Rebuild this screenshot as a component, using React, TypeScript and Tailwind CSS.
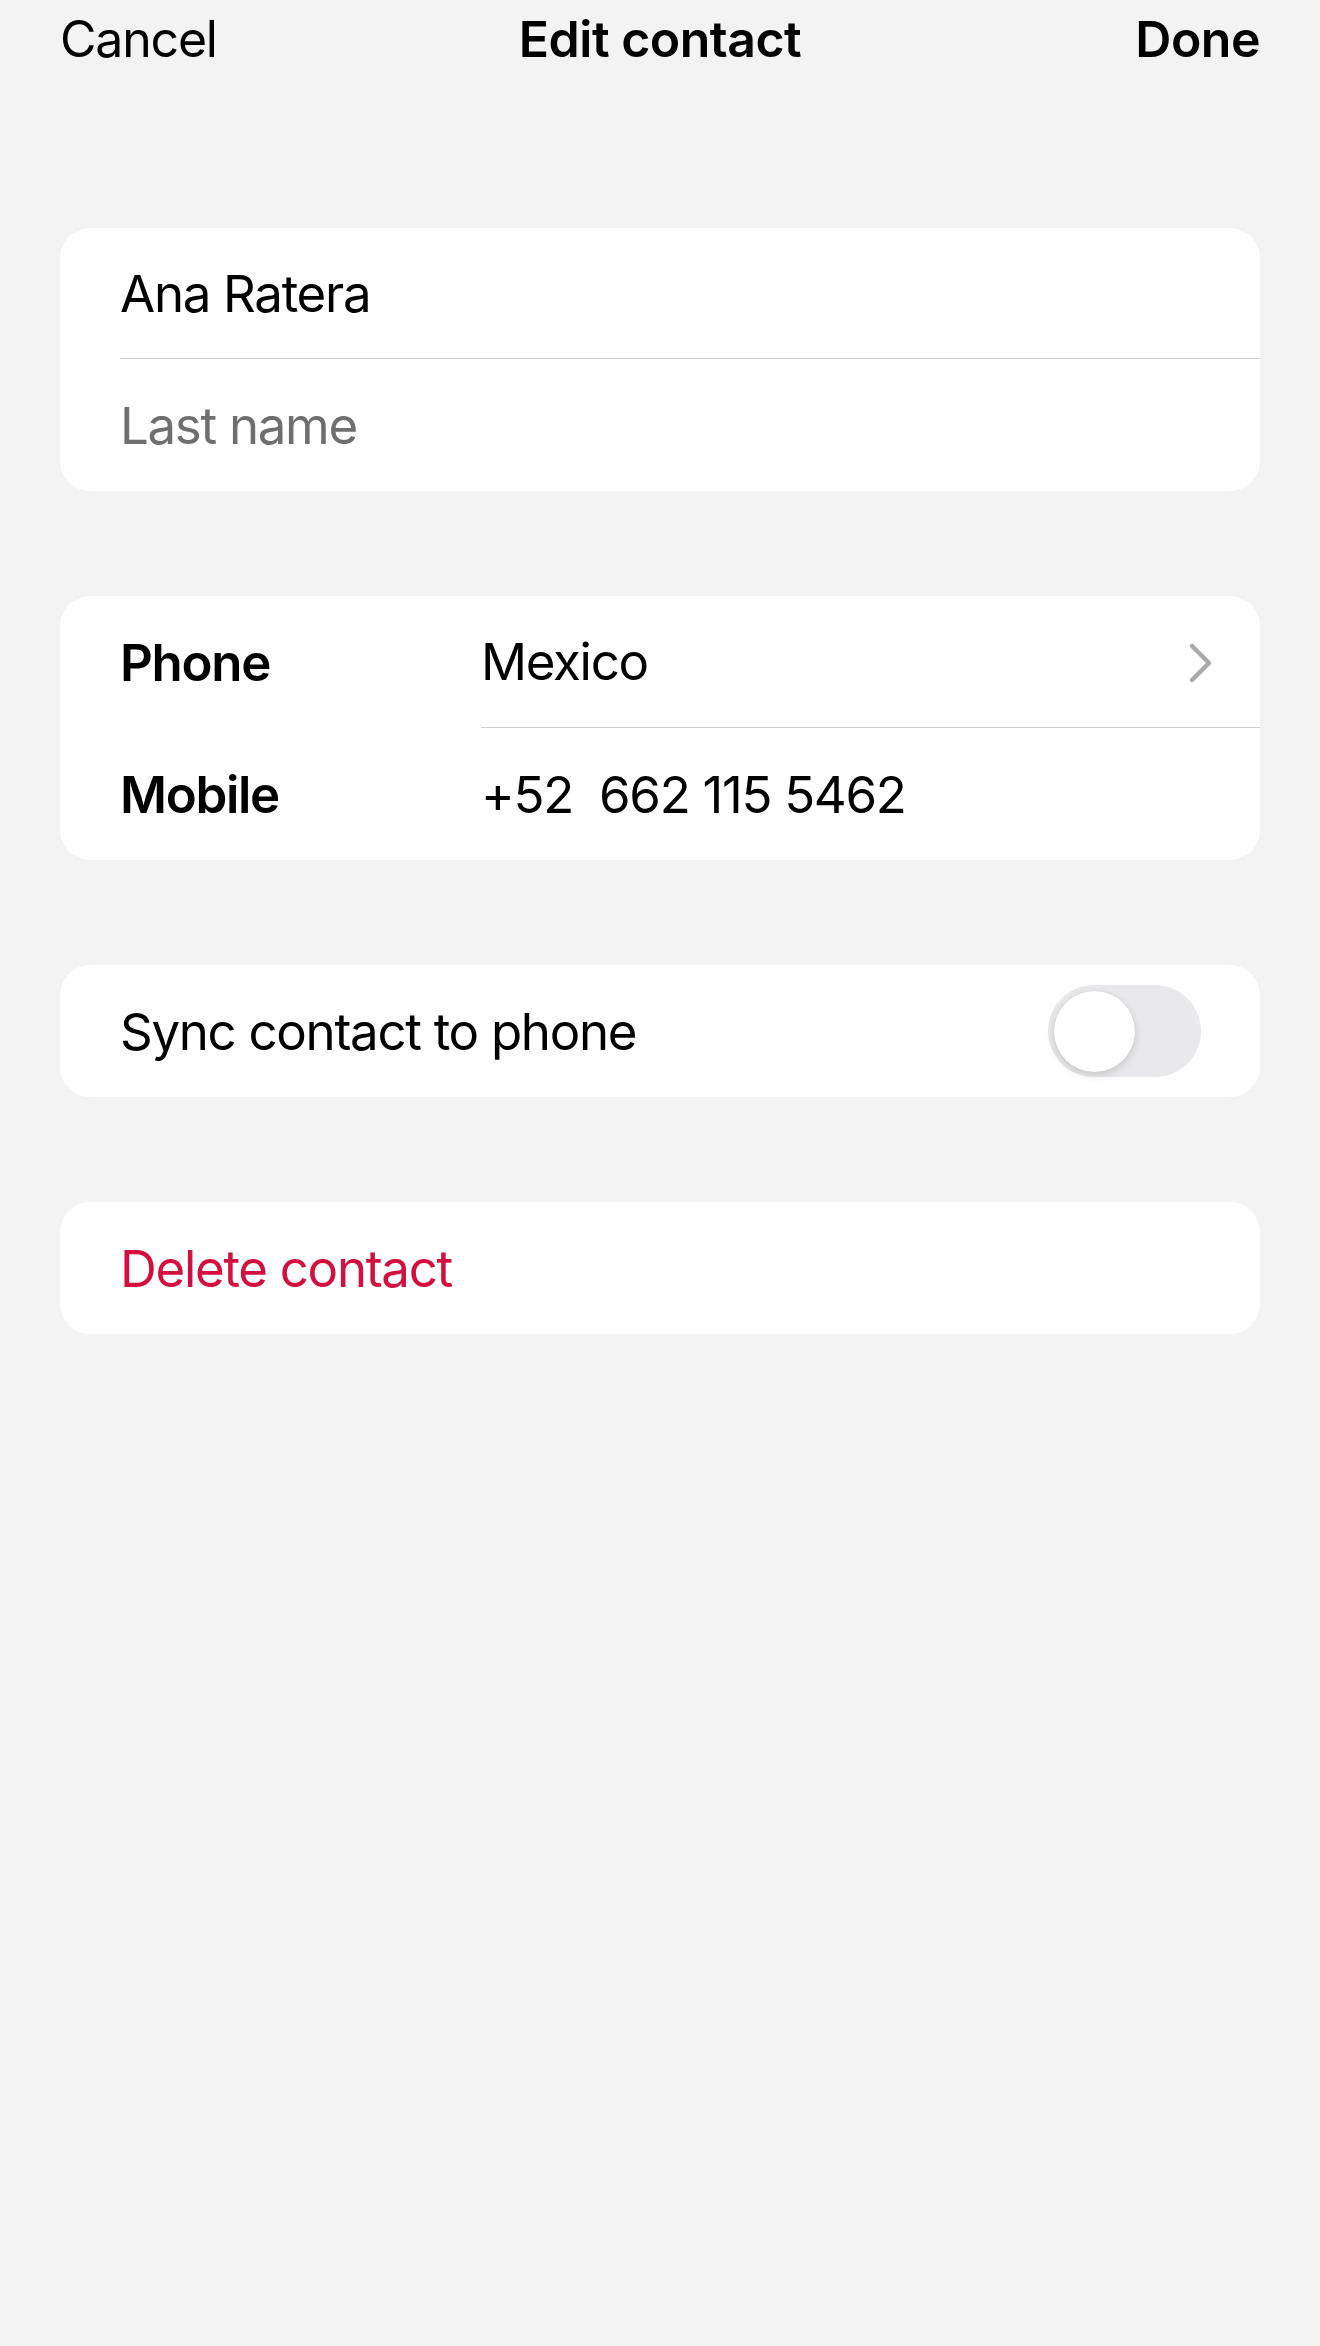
import React, { useState } from 'react';

// Edit contact sheet (iOS-style grouped list)

function Chevron() {
  return (
    <svg width="26" height="42" viewBox="0 0 26 42" fill="none">
      <polyline
        points="4,4 21,21 4,38"
        stroke="#aaaaaa"
        strokeWidth="4.5"
        strokeLinecap="round"
        strokeLinejoin="round"
      />
    </svg>
  );
}

function Toggle({ on, onChange }: { on: boolean; onChange: (v: boolean) => void }) {
  return (
    <button
      onClick={() => onChange(!on)}
      className={`flex items-center w-[153px] h-[92px] rounded-full p-[6px] ${
        on ? 'bg-[#34c759] justify-end' : 'bg-[#e9e9eb] justify-start'
      }`}
    >
      <span className="block w-[81px] h-[81px] rounded-full bg-white shadow-[0_3px_8px_rgba(0,0,0,0.15),0_0_1px_rgba(0,0,0,0.12)]" />
    </button>
  );
}

export default function App() {
  const [sync, setSync] = useState(false);

  return (
    <div
      className="min-h-[2346px] w-full bg-[#f3f3f3] text-black"
      style={{ fontFamily: 'Inter, "Noto Sans", "Liberation Sans", sans-serif' }}
    >
      {/* Header */}
      <div className="relative flex items-center justify-between h-[78px] px-[60px] text-[50px]">
        <span className="tracking-[-1.2px]">Cancel</span>
        <span className="absolute left-1/2 -translate-x-1/2 font-semibold tracking-[-0.5px]">Edit contact</span>
        <span className="font-semibold tracking-[-0.5px]">Done</span>
      </div>

      <div className="flex flex-col gap-[105px] px-[60px] pt-[150px] text-[51px] tracking-[-1.3px]">
        {/* Name */}
        <div className="bg-white rounded-[30px] overflow-hidden">
          <div className="ml-[60px] h-[131px] pt-[3px] flex items-center border-b border-[#d0d0d0]">
            Ana Ratera
          </div>
          <div className="pl-[60px] h-[132px] pt-[3px] flex items-center text-[#6f6f6f]">Last name</div>
        </div>

        {/* Phone */}
        <div className="bg-white rounded-[30px] overflow-hidden">
          <div className="flex h-[132px]">
            <div className="w-[421px] pl-[60px] pt-[2px] flex items-center font-semibold">Phone</div>
            <div className="flex-1 flex items-center justify-between pr-[46px] pt-[2px] border-b border-[#d0d0d0]">
              <span>Mexico</span>
              <Chevron />
            </div>
          </div>
          <div className="flex h-[132px]">
            <div className="w-[421px] pl-[60px] pt-[2px] flex items-center font-semibold">Mobile</div>
            <div className="flex-1 flex items-center pt-[2px] whitespace-pre">+52  662 115 5462</div>
          </div>
        </div>

        {/* Sync */}
        <div className="bg-white rounded-[30px] h-[132px] flex items-center justify-between pl-[60px] pr-[59px]">
          <span className="pt-[3px]">Sync contact to phone</span>
          <Toggle on={sync} onChange={setSync} />
        </div>

        {/* Delete */}
        <div className="bg-white rounded-[30px] h-[132px] pt-[3px] flex items-center pl-[60px] text-[#d20f3e]">
          Delete contact
        </div>
      </div>
    </div>
  );
}
